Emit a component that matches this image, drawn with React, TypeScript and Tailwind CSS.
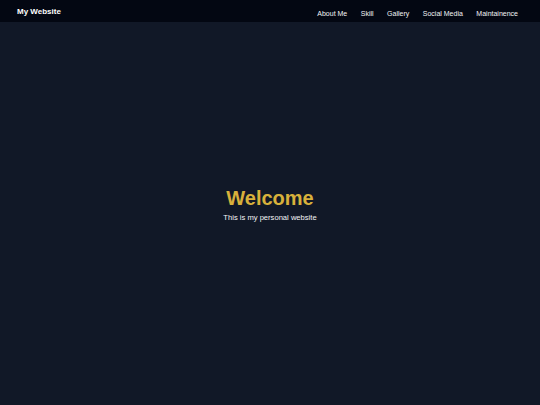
export default function App() {
  const links = ["About Me", "Skill", "Gallery", "Social Media", "Maintainence"]

  return (
    <div className="min-h-screen flex flex-col bg-[#111827] antialiased font-['Liberation_Sans',Arial,sans-serif]">
      {/* Top navigation */}
      <nav className="h-[22px] flex items-center justify-between bg-[#030712] pl-[17px] pr-[22px]">
        <span className="text-[8px] font-bold text-white leading-none mt-[1px]">My Website</span>
        <ul className="flex items-center gap-[13.5px]">
          {links.map((link) => (
            <li key={link}>
              <a href="#" className="text-[7px] text-gray-100 leading-none">
                {link}
              </a>
            </li>
          ))}
        </ul>
      </nav>

      {/* Hero */}
      <main className="flex-1 flex flex-col items-center justify-center pb-[17px]">
        <h1 className="text-[20px] leading-[24px] font-bold text-[#d8b13b]">Welcome</h1>
        <p className="text-[7.6px] text-gray-100 mt-[2px]">This is my personal website</p>
      </main>
    </div>
  )
}
